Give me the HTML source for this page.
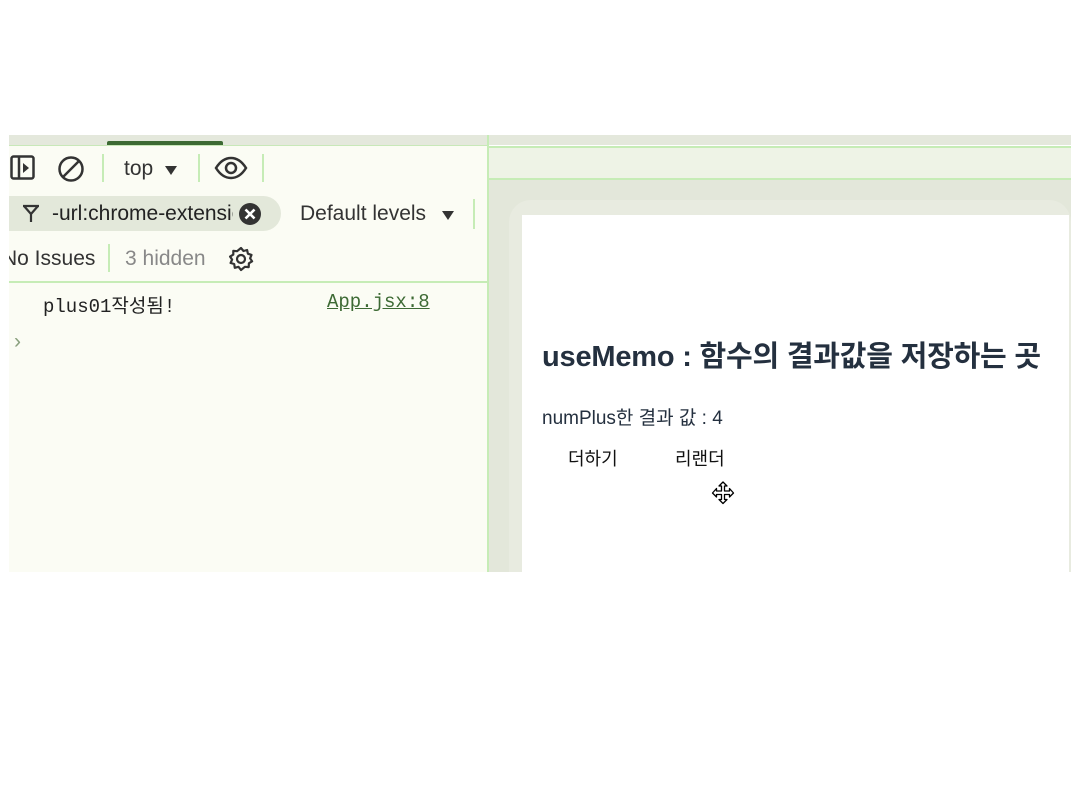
<!DOCTYPE html>
<html><head><meta charset="utf-8"><style>
body{margin:0;width:1080px;height:810px;background:#fff;position:relative;overflow:hidden;font-family:"Liberation Sans","Noto Sans CJK KR",sans-serif}
.a{position:absolute}
</style></head><body>
<div class="a" style="left:9px;top:135px;width:478px;height:437px;background:#fbfcf4"></div>
<div class="a" style="left:9px;top:135px;width:1062px;height:10px;background:#e4e8dc"></div>
<div class="a" style="left:9px;top:145px;width:478px;height:1px;background:#c8e8b8"></div>
<div class="a" style="left:107px;top:141px;width:116px;height:4px;background:#3d6a34;border-radius:2px 2px 0 0"></div>
<div class="a" style="left:487px;top:135px;width:2px;height:437px;background:#c6ecb6"></div>
<svg class="a" style="left:10px;top:155px" width="26" height="26" viewBox="0 0 26 26"><rect x="1.5" y="1.5" width="22" height="22" rx="2" fill="none" stroke="#333" stroke-width="2.5"/><line x1="9" y1="2" x2="9" y2="24" stroke="#333" stroke-width="2.5"/><path d="M13 8l6 5-6 5z" fill="#333"/></svg>
<svg class="a" style="left:57px;top:155px" width="28" height="28" viewBox="0 0 28 28"><circle cx="14" cy="14" r="11.5" fill="none" stroke="#333" stroke-width="2.5"/><line x1="6" y1="22" x2="22" y2="6" stroke="#333" stroke-width="2.5"/></svg>
<div class="a" style="left:102px;top:154px;width:2px;height:28px;background:#c6ecb6"></div>
<div class="a" style="left:124px;top:157px;font-size:21px;color:#333">top</div>
<svg class="a" style="left:164px;top:165px" width="14" height="10"><path d="M1 1h12l-6 9z" fill="#333"/></svg>
<div class="a" style="left:198px;top:154px;width:2px;height:28px;background:#c6ecb6"></div>
<svg class="a" style="left:214px;top:156px" width="34" height="24" viewBox="0 0 34 24"><path d="M2 12C7 4 12 2 17 2s10 2 15 10c-5 8-10 10-15 10S7 20 2 12z" fill="none" stroke="#333" stroke-width="2.5"/><circle cx="17" cy="12" r="5" fill="none" stroke="#333" stroke-width="2.5"/></svg>
<div class="a" style="left:262px;top:154px;width:2px;height:28px;background:#c6ecb6"></div>
<div class="a" style="left:9px;top:196px;width:272px;height:35px;background:#e3e8da;border-radius:0 18px 18px 0"></div>
<svg class="a" style="left:22px;top:204px" width="18" height="20" viewBox="0 0 18 20"><path d="M1 2h16M2 2l7 8v8M16 2l-7 8" fill="none" stroke="#333" stroke-width="2.2"/></svg>
<div class="a" style="left:52px;top:202px;font-size:21px;color:#222;width:181px;overflow:hidden;white-space:nowrap">-url:chrome-extension</div>
<svg class="a" style="left:238px;top:202px" width="24" height="24"><circle cx="12" cy="12" r="11" fill="#333"/><path d="M7.5 7.5l9 9M16.5 7.5l-9 9" stroke="#fff" stroke-width="2.6"/></svg>
<div class="a" style="left:300px;top:202px;font-size:21px;color:#333">Default levels</div>
<svg class="a" style="left:441px;top:210px" width="14" height="10"><path d="M1 1h12l-6 9z" fill="#333"/></svg>
<div class="a" style="left:473px;top:199px;width:2px;height:30px;background:#c6ecb6"></div>
<div class="a" style="left:2px;top:247px;font-size:21px;color:#333">No Issues</div>
<div class="a" style="left:0;top:245px;width:9px;height:30px;background:#fff"></div>
<div class="a" style="left:108px;top:244px;width:2px;height:28px;background:#c6ecb6"></div>
<div class="a" style="left:125px;top:247px;font-size:21px;color:#888">3 hidden</div>
<svg class="a" style="left:228px;top:246px" width="26" height="26" viewBox="0 0 26 26"><path d="M13 2l2.5 3 3.6-1 .8 3.7 3.6 1.2-1.4 3.4 2 3-3.2 2-.2 3.8-3.8-.3L13 24l-2.5-3.2-3.7 1-.6-3.8L2.6 17l1.5-3.4-2-3 3.2-2L5.3 4.9l3.8.3z" fill="none" stroke="#333" stroke-width="2.2" stroke-linejoin="round"/><circle cx="13" cy="13" r="4" fill="none" stroke="#333" stroke-width="2.2"/></svg>
<div class="a" style="left:9px;top:281px;width:478px;height:2px;background:#c6ecb6"></div>
<div class="a" style="left:43px;top:291px;font-family:'Liberation Mono','Noto Sans CJK KR',monospace;font-size:19px;color:#222">plus01작성됨!</div>
<div class="a" style="left:327px;top:291px;font-family:'Liberation Mono',monospace;font-size:19px;color:#3d6a34;text-decoration:underline">App.jsx:8</div>
<div class="a" style="left:14px;top:330px;font-size:21px;color:#8aa07e">›</div>
<div class="a" style="left:489px;top:146px;width:582px;height:2px;background:#c6ecb6"></div>
<div class="a" style="left:489px;top:148px;width:582px;height:30px;background:#eef3e6"></div>
<div class="a" style="left:489px;top:178px;width:582px;height:2px;background:#c6ecb6"></div>
<div class="a" style="left:489px;top:180px;width:582px;height:392px;background:#e3e7da"></div>
<div class="a" style="left:509px;top:200px;width:562px;height:372px;background:#e8ebe0;border-radius:22px 22px 0 0"></div>
<div class="a" style="left:522px;top:215px;width:547px;height:357px;background:#fff"></div>
<div class="a" style="left:542px;top:333px;font-size:29px;font-weight:bold;color:#24303f;letter-spacing:-0.2px;white-space:nowrap">useMemo : 함수의 결과값을 저장하는 곳</div>
<div class="a" style="left:542px;top:403px;font-size:19px;color:#24303f">numPlus한 결과 값 : 4</div>
<div class="a" style="left:568px;top:445px;font-size:18px;color:#111">더하기</div>
<div class="a" style="left:675px;top:445px;font-size:18px;color:#111">리랜더</div>
<svg class="a" style="left:710px;top:480px" width="26" height="26" viewBox="0 0 26 26"><path d="M13 2l4 4h-2.5v5h5V8.5l4 4.5-4 4v-2.5h-5v5H17l-4 4-4-4h2.5v-5h-5V17l-4-4 4-4.5V11h5V6H9z" fill="#fff" stroke="#000" stroke-width="1.3" stroke-linejoin="round"/></svg>
</body></html>
